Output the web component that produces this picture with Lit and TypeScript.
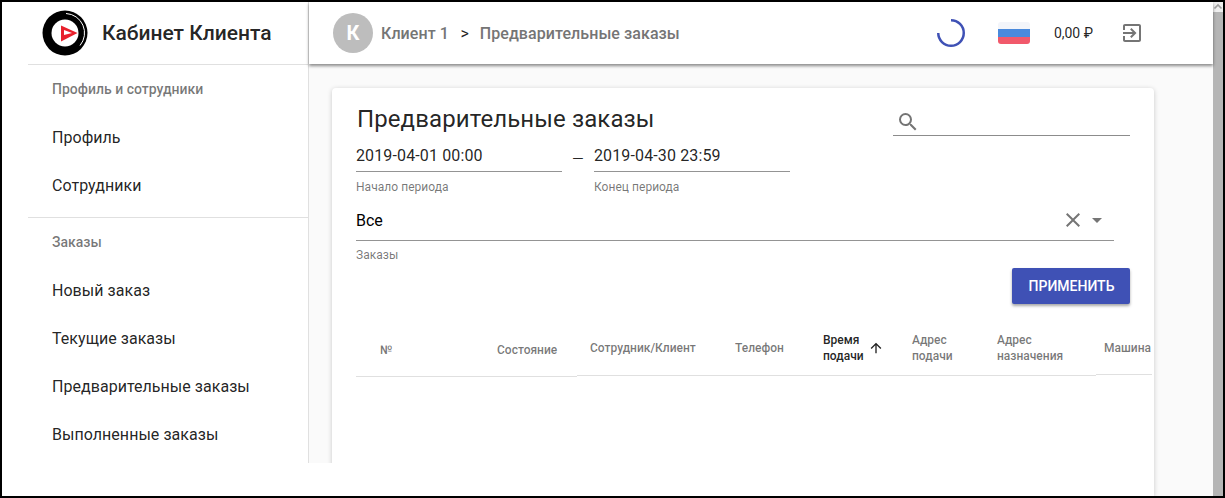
import { LitElement, html, css, svg } from "lit";
import { customElement } from "lit/decorators.js";

const icon = (d: string, size = 24) =>
  html`<svg class="ic" width=${size} height=${size} viewBox="0 0 24 24" fill="currentColor"><path d=${d}></path></svg>`;

const IC = {
  search: "M15.5 14h-.79l-.28-.27A6.471 6.471 0 0 0 16 9.5 6.5 6.5 0 1 0 9.5 16c1.61 0 3.09-.59 4.23-1.57l.27.28v.79l5 4.99L20.49 19l-4.99-5zm-6 0C7.01 14 5 11.99 5 9.5S7.01 5 9.5 5 14 7.01 14 9.5 11.99 14 9.5 14z",
  clear: "M19 6.41L17.59 5 12 10.59 6.41 5 5 6.41 10.59 12 5 17.59 6.41 19 12 13.41 17.59 19 19 17.59 13.41 12z",
  drop: "M7 10l5 5 5-5z",
  up: "M4 12l1.41 1.41L11 7.83V20h2V7.83l5.58 5.59L20 12l-8-8-8 8z",
  exit: "M10.09 15.59L11.5 17l5-5-5-5-1.41 1.41L12.67 11H3v2h9.67l-2.58 2.59zM19 3H5c-1.11 0-2 .9-2 2v4h2V5h14v14H5v-4H3v4c0 1.1.89 2 2 2h14c1.1 0 2-.9 2-2V5c0-1.1-.9-2-2-2z",
};

@customElement("app-root")
export class AppRoot extends LitElement {
  static styles = css`
    :host {
      display: block;
      width: 1225px;
      height: 498px;
      font-family: Roboto, "Noto Sans", sans-serif;
      color: rgba(0, 0, 0, 0.87);
    }
    * { box-sizing: border-box; }
    .frame {
      width: 1225px;
      height: 498px;
      border: 2px solid #000;
      display: flex;
      background: #fff;
      overflow: hidden;
    }
    .side {
      width: 307px;
      height: 461px;
      flex: none;
      padding-left: 26px;
      border-right: 1px solid #e0e0e0;
    }
    .brand {
      height: 62px;
      padding-left: 14px;
      display: flex;
      align-items: center;
      gap: 14px;
      font-size: 21px;
      font-weight: 500;
      white-space: nowrap;
    }
    .hr { height: 1px; background: #e0e0e0; }
    .sec {
      height: 48px;
      padding-left: 24px;
      display: flex;
      align-items: center;
      font-size: 14px;
      font-weight: 500;
      color: rgba(0, 0, 0, 0.54);
    }
    .item {
      height: 48px;
      padding-left: 24px;
      display: flex;
      align-items: center;
      font-size: 16px;
      letter-spacing: 0.04px;
    }
    .hr.mid { margin-top: 8px; }
    .main {
      flex: 1;
      min-width: 0;
      display: flex;
      flex-direction: column;
      background: #fafafa;
    }
    .top {
      height: 62px;
      flex: none;
      background: #fff;
      display: flex;
      align-items: center;
      padding-left: 24px;
      position: relative;
      z-index: 2;
      box-shadow: 0 2px 3px rgba(0, 0, 0, 0.45);
    }
    .avatar {
      width: 40px;
      height: 40px;
      border-radius: 50%;
      background: #bdbdbd;
      color: #fff;
      font-size: 20px;
      font-weight: 700;
      display: flex;
      align-items: center;
      justify-content: center;
      margin-right: 8px;
    }
    .crumb { font-size: 16px; font-weight: 500; color: #757575; letter-spacing: 0.07px; }
    .sep { font-size: 16px; color: rgba(0, 0, 0, 0.87); margin: 0 11px 0 11.5px; }
    .spin { margin-left: auto; display: block; }
    .flag {
      width: 32px;
      height: 22px;
      margin-left: 33px;
      border-radius: 3px;
      overflow: hidden;
      display: flex;
      flex-direction: column;
    }
    .flag i { flex: 1; display: block; }
    .f1 { background: #f3f5fa; }
    .f2 { background: #4a8adc; }
    .f3 { background: #f1596b; }
    .bal { font-size: 14px; margin-left: 24px; white-space: nowrap; }
    .exit { margin-left: 27px; margin-right: 69px; color: #757575; display: flex; }
    .ic { display: block; flex: none; }
    .body { flex: 1; display: flex; min-height: 0; }
    .strip { width: 23px; flex: none; display: flex; flex-direction: column; }
    .strip .fill {
      margin-top: 399px;
      flex: 1;
      background: #fff;
      position: relative;
      z-index: 1;
    }
    .card {
      width: 822px;
      flex: none;
      margin-top: 24px;
      background: #fff;
      border-radius: 4px 4px 0 0;
      box-shadow: 0 1px 5px rgba(0, 0, 0, 0.2);
      padding: 15px 24px 0 24px;
      overflow: hidden;
    }
    .head { height: 33px; display: flex; justify-content: space-between; }
    h1 {
      margin: 0 0 0 1px;
      font-size: 24px;
      line-height: 32px;
      font-weight: 400;
      letter-spacing: 0.1px;
    }
    .search {
      width: 237px;
      height: 33px;
      border-bottom: 1px solid #8c8c8c;
      padding: 7px 0 0 3px;
      color: #757575;
    }
    .dates { display: flex; padding-top: 8px; }
    .field { width: 206px; }
    .field.b { width: 196px; }
    .val {
      font-size: 16px;
      line-height: 24px;
      padding-bottom: 3px;
      border-bottom: 1px solid #949494;
      white-space: nowrap;
      letter-spacing: 0.13px;
    }
    .lab {
      font-size: 12px;
      line-height: 16px;
      margin-top: 7px;
      color: rgba(0, 0, 0, 0.54);
      letter-spacing: 0.04px;
    }
    .dash {
      width: 32px;
      text-align: center;
      font-size: 20px;
      font-weight: 300;
      line-height: 30px;
      flex: none;
    }
    .select { width: 758px; margin-top: 13px; }
    .select .lab { margin-top: 6px; }
    .selrow {
      display: flex;
      align-items: center;
      height: 33px;
      padding-right: 5px;
      padding-bottom: 8px;
      border-bottom: 1px solid #949494;
      font-size: 16px;
      color: #000;
    }
    .selrow span { flex: 1; }
    .selrow .ic { color: #757575; }
    .actions { display: flex; justify-content: flex-end; margin-top: 5px; }
    button {
      width: 118px;
      height: 36px;
      border: 0;
      border-radius: 2px;
      background: #3f51b5;
      color: #fff;
      font: 500 14px Roboto, sans-serif;
      text-transform: uppercase;
      box-shadow: 0 2px 3px rgba(0, 0, 0, 0.35);
      padding: 0 0 0 1px;
    }
    .thead {
      display: flex;
      align-items: flex-start;
      margin-top: 16px;
      width: 796px;
      font-size: 12px;
      font-weight: 500;
      line-height: 16px;
      color: rgba(0, 0, 0, 0.54);
    }
    .th {
      height: 56px;
      flex: none;
      display: flex;
      align-items: center;
      padding-left: 24px;
      border-bottom: 1px solid #e0e0e0;
      white-space: nowrap;
    }
    .th.low { height: 57px; padding-top: 3px; }
    .th.high { height: 55px; padding-left: 8px; padding-top: 2px; }
    .th.tight { padding-left: 13px; }
    .th.sorted { color: rgba(0, 0, 0, 0.87); }
    .th.sorted .ic { margin-left: 4px; }
    .gutter { flex: 1; }
    .sb { width: 10px; flex: none; background: #b5b5b5; }
    .sb .btn {
      height: 10px;
      background: #efefef;
      display: block;
    }
  `;

  private logo() {
    return html`<svg width="46" height="46" viewBox="0 0 46 46" class="ic">
      <circle cx="23" cy="23" r="22.5" fill="#000"></circle>
      <path d="M24 3.5A19.5 19.5 0 0 1 38 35.5" fill="none" stroke="#fff" stroke-width="1"></path>
      <circle cx="23" cy="23" r="13.5" fill="#fff"></circle>
      ${svg`<path d="M19 15.5 L35.5 23 L19 31.5 Z" fill="#e8202c"></path>
      <path d="M22 20 L30 23 L22 25 Z" fill="#fff"></path>`}
    </svg>`;
  }

  render() {
    return html`<div class="frame">
      <aside class="side">
        <div class="brand">${this.logo()}<span>Кабинет Клиента</span></div>
        <div class="hr"></div>
        <div class="sec">Профиль и сотрудники</div>
        <div class="item">Профиль</div>
        <div class="item">Сотрудники</div>
        <div class="hr mid"></div>
        <div class="sec">Заказы</div>
        <div class="item">Новый заказ</div>
        <div class="item">Текущие заказы</div>
        <div class="item">Предварительные заказы</div>
        <div class="item">Выполненные заказы</div>
      </aside>
      <div class="main">
        <header class="top">
          <div class="avatar">К</div>
          <span class="crumb">Клиент 1</span>
          <span class="sep">&gt;</span>
          <span class="crumb">Предварительные заказы</span>
          <svg class="spin" width="28" height="28" viewBox="0 0 28 28" fill="none">
            <path d="M14 1.25A12.75 12.75 0 1 1 1.25 14" stroke="#3f51b5" stroke-width="2.5"></path>
          </svg>
          <div class="flag"><i class="f1"></i><i class="f2"></i><i class="f3"></i></div>
          <span class="bal">0,00 ₽</span>
          <span class="exit">${icon(IC.exit)}</span>
        </header>
        <div class="body">
          <div class="strip"><div class="fill"></div></div>
          <section class="card">
            <div class="head">
              <h1>Предварительные заказы</h1>
              <div class="search">${icon(IC.search)}</div>
            </div>
            <div class="dates">
              <div class="field">
                <div class="val">2019-04-01 00:00</div>
                <div class="lab">Начало периода</div>
              </div>
              <div class="dash">–</div>
              <div class="field b">
                <div class="val">2019-04-30 23:59</div>
                <div class="lab">Конец периода</div>
              </div>
            </div>
            <div class="select">
              <div class="selrow">
                <span>Все</span>${icon(IC.clear)}${icon(IC.drop)}
              </div>
              <div class="lab">Заказы</div>
            </div>
            <div class="actions"><button>Применить</button></div>
            <div class="thead">
              <div class="th low" style="width:117px">№</div>
              <div class="th low" style="width:104px">Состояние</div>
              <div class="th tight" style="width:134px">Сотрудник/Клиент</div>
              <div class="th" style="width:88px">Телефон</div>
              <div class="th sorted" style="width:89px">
                <span>Время<br />подачи</span>${icon(IC.up, 16)}
              </div>
              <div class="th" style="width:85px"><span>Адрес<br />подачи</span></div>
              <div class="th" style="width:123px"><span>Адрес<br />назначения</span></div>
              <div class="th high" style="width:56px">Машина</div>
            </div>
          </section>
          <div class="gutter"></div>
        </div>
      </div>
      <div class="sb">
        <svg class="btn" width="10" height="10" viewBox="0 0 10 10" fill="none">
          <path d="M1.5 6.5 L5 3 L8.5 6.5" stroke="#9e9e9e" stroke-width="1.6"></path>
        </svg>
      </div>
    </div>`;
  }
}
